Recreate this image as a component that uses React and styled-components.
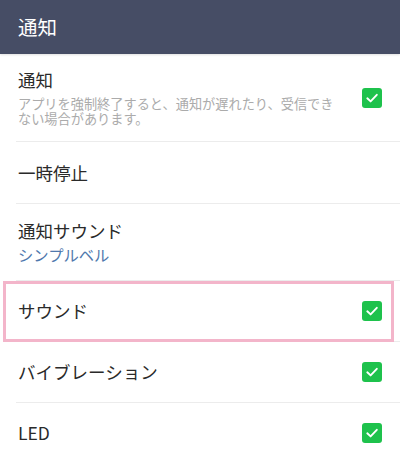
import React from 'react';
import styled, { createGlobalStyle } from 'styled-components';

const GlobalStyle = createGlobalStyle`
  html, body {
    margin: 0;
    padding: 0;
    background: #ffffff;
  }
  body {
    font-family: "Noto Sans CJK JP", "Noto Sans", Roboto, sans-serif;
  }
`;

const Screen = styled.div`
  width: 400px;
  height: 462px;
  overflow: hidden;
  background: #ffffff;
`;

const Header = styled.header`
  height: 54px;
  display: flex;
  align-items: center;
  padding: 0 18px;
  background: #464d65;
  box-shadow: 0 1px 2px rgba(0, 0, 0, 0.12);
  position: relative;
  z-index: 1;
`;

const HeaderTitle = styled.h1`
  margin: 0;
  font-size: 19.5px;
  font-weight: 400;
  color: #ffffff;
  line-height: 1;
`;

const List = styled.ul`
  list-style: none;
  margin: 0;
  padding: 0;
`;

const Row = styled.li`
  position: relative;
  display: flex;
  align-items: center;
  justify-content: space-between;
  box-sizing: border-box;
  min-height: ${p => p.$height || 61}px;
  padding: 0 18px;
  border-bottom: 1px solid #ececec;

  &::before {
    content: '';
    position: absolute;
    left: 0;
    width: 16px;
    bottom: -1px;
    height: 1px;
    background: #ffffff;
  }

  ${p => p.$highlighted && `
    &::after {
      content: '';
      position: absolute;
      left: 3px;
      right: 6px;
      top: 0;
      bottom: -1px;
      border: 3px solid #f3b5ca;
      pointer-events: none;
    }
  `}
`;

const Texts = styled.div`
  display: flex;
  flex-direction: column;
  padding: 15px 0;
  flex: 1;
  min-width: 0;
`;

const Title = styled.div`
  font-size: 17.5px;
  line-height: 22px;
  color: #2a2a2a;
`;

const Description = styled.div`
  margin-top: 6px;
  font-size: 13.2px;
  line-height: 14.5px;
  color: #ababab;
  padding-right: 20px;
`;

const Value = styled.div`
  margin-top: 2px;
  font-size: 15.3px;
  line-height: 20px;
  color: #4f78ad;
`;

const CheckBox = styled.span`
  flex: none;
  width: 20px;
  height: 20px;
  border-radius: 3px;
  background: #1ec24c;
  display: flex;
  align-items: center;
  justify-content: center;
`;

const Check = () => (
  <CheckBox>
    <svg width="14" height="14" viewBox="0 0 14 14" fill="none">
      <path d="M2.3 7.3 L5.6 10.4 L11.8 3.8" stroke="#ffffff" strokeWidth="1.9" strokeLinecap="round" strokeLinejoin="round" />
    </svg>
  </CheckBox>
);

const items = [
  { title: '通知', desc: 'アプリを強制終了すると、通知が遅れたり、受信できない場合があります。', checked: true, height: 87 },
  { title: '一時停止', height: 62 },
  { title: '通知サウンド', value: 'シンプルベル', height: 77 },
  { title: 'サウンド', checked: true, highlighted: true, height: 61 },
  { title: 'バイブレーション', checked: true, height: 61 },
  { title: 'LED', checked: true, height: 61 },
];

export default function App() {
  return (
    <Screen>
      <GlobalStyle />
      <Header>
        <HeaderTitle>通知</HeaderTitle>
      </Header>
      <List>
        {items.map(item => (
          <Row key={item.title} $height={item.height} $highlighted={item.highlighted}>
            <Texts>
              <Title>{item.title}</Title>
              {item.desc && <Description>{item.desc}</Description>}
              {item.value && <Value>{item.value}</Value>}
            </Texts>
            {item.checked && <Check />}
          </Row>
        ))}
      </List>
    </Screen>
  );
}
